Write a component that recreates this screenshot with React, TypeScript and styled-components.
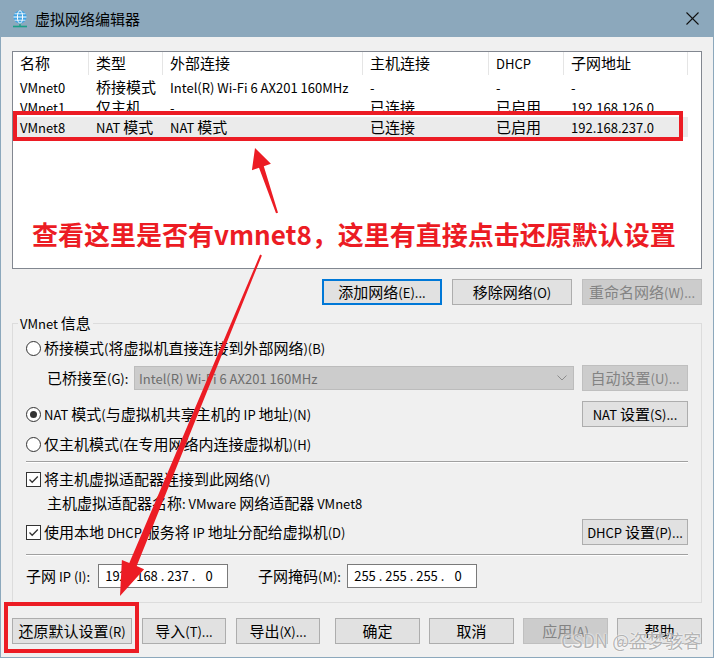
import React from 'react';
import styled, { createGlobalStyle } from 'styled-components';

const GlobalStyle = createGlobalStyle`
  html, body {
    margin: 0;
    padding: 0;
    background: #ffffff;
  }
  * {
    box-sizing: border-box;
  }
`;

const Window = styled.div`
  position: relative;
  width: 714px;
  height: 658px;
  display: flex;
  flex-direction: column;
  background: #f0f0f0;
  box-shadow: inset 0 0 0 1px #8ca8bc;
  overflow: hidden;
  color: #000;
  font-family: "Noto Sans CJK SC", "Noto Sans", sans-serif;
  font-size: 15px;
  line-height: 20px;
`;

// the dialog font draws latin letters smaller than the CJK glyphs
const Latin = styled.span`
  font-size: 13px;
`;

const T: React.FC<{ children: string }> = ({ children }) => (
  <span>
    {children.split(/([\x20-\x7e]+)/).map((part, i) =>
      i % 2 === 1 ? <Latin key={i}>{part}</Latin> : part
    )}
  </span>
);

const TitleBar = styled.div`
  height: 37px;
  flex: none;
  display: flex;
  align-items: center;
  padding: 0 15px 0 12px;
  background: #8ca8bc;
`;

const TitleText = styled.div`
  margin-left: 7px;
  font-size: 15px;
`;

const CloseGlyph = styled.svg`
  margin-left: auto;
  width: 13px;
  height: 13px;
`;

const Body = styled.div`
  display: flex;
  flex-direction: column;
  padding: 14px 12px 0 12px;
`;

const ListView = styled.div`
  height: 218px;
  background: #fff;
  border: 1px solid #828790;
`;

const ListHeader = styled.div`
  display: flex;
  height: 25px;
`;

const HeaderCell = styled.div<{ $w: number }>`
  width: ${p => p.$w}px;
  flex: none;
  height: 23px;
  padding-left: 7px;
  line-height: 22px;
  border-right: 1px solid #e5e5e5;
  white-space: nowrap;
`;

const ListRow = styled.div<{ $selected?: boolean }>`
  display: flex;
  width: 675px;
  height: 20px;
  background: ${p => (p.$selected ? '#ebebeb' : 'transparent')};
`;

const Cell = styled.div<{ $w: number }>`
  width: ${p => p.$w}px;
  flex: none;
  padding-left: 7px;
  line-height: 20px;
  white-space: nowrap;
  overflow: hidden;
`;

const ButtonRow = styled.div<{ $top: number; $gap: number }>`
  display: flex;
  justify-content: flex-end;
  gap: ${p => p.$gap}px;
  margin-top: ${p => p.$top}px;
`;

type Variant = 'normal' | 'focused' | 'disabled';

const Button = styled.button<{ $w: number; $variant?: Variant }>`
  width: ${p => p.$w}px;
  height: 26px;
  flex: none;
  padding: 0;
  font: inherit;
  line-height: 20px;
  white-space: nowrap;
  background: ${p => (p.$variant === 'disabled' ? '#cccccc' : '#e1e1e1')};
  color: ${p => (p.$variant === 'disabled' ? '#838383' : '#000')};
  border: ${p =>
    p.$variant === 'focused'
      ? '2px solid #0078d7'
      : p.$variant === 'disabled'
      ? '1px solid #bfbfbf'
      : '1px solid #adadad'};
`;

const GroupBox = styled.fieldset`
  margin: 8px 0 0 0;
  padding: 0;
  height: 290px;
  min-inline-size: 0;
  border: 1px solid #dcdcdc;
`;

const GroupLegend = styled.legend`
  margin-left: 5px;
  padding: 0 2px;
  line-height: 20px;
`;

const GroupInner = styled.div`
  display: flex;
  flex-direction: column;
  padding: 0 13px;
`;

const OptionRow = styled.div<{ $top: number; $h?: number; $indent?: number }>`
  display: flex;
  align-items: center;
  height: ${p => p.$h ?? 20}px;
  margin-top: ${p => p.$top}px;
  padding-left: ${p => p.$indent ?? 0}px;
  white-space: nowrap;
`;

const Spacer = styled.div`
  flex: 1;
`;

const Radio = styled.span<{ $checked?: boolean }>`
  position: relative;
  width: 15px;
  height: 15px;
  flex: none;
  margin-right: 3px;
  border: 1px solid #333;
  border-radius: 50%;
  background: #fff;
  &::after {
    content: '';
    display: ${p => (p.$checked ? 'block' : 'none')};
    position: absolute;
    left: 3px;
    top: 3px;
    width: 7px;
    height: 7px;
    border-radius: 50%;
    background: #333;
  }
`;

const CheckBox = styled.span`
  display: flex;
  align-items: center;
  justify-content: center;
  width: 15px;
  height: 15px;
  flex: none;
  margin-right: 3px;
  border: 1px solid #333;
  background: #fff;
`;

const Combo = styled.div`
  display: flex;
  align-items: center;
  width: 440px;
  height: 24px;
  padding-left: 4px;
  padding-right: 6px;
  background: #cccccc;
  border: 1px solid #bcbcbc;
  color: #6d6d6d;
`;

const Separator = styled.div<{ $top: number }>`
  margin-top: ${p => p.$top}px;
  height: 2px;
  border-top: 1px solid #a0a0a0;
  border-bottom: 1px solid #ffffff;
`;

const FieldLabel = styled.div<{ $w: number; $left?: number }>`
  width: ${p => p.$w}px;
  margin-left: ${p => p.$left ?? 0}px;
  flex: none;
`;

const IpBox = styled.div`
  display: flex;
  align-items: center;
  width: 130px;
  height: 24px;
  padding-left: 5px;
  background: #fff;
  border: 1px solid #7a7a7a;
  font-size: 13px;
`;

const IpPart = styled.span`
  width: 24px;
  text-align: center;
`;

const IpDot = styled.span`
  width: 7px;
  text-align: center;
`;

const Footer = styled.div`
  display: flex;
  justify-content: space-between;
  margin-top: 15px;
`;

const ButtonGroup = styled.div<{ $gap: number }>`
  display: flex;
  gap: ${p => p.$gap}px;
`;

/* annotation layer drawn over the dialog */
const MarkBox = styled.div`
  position: absolute;
  border: 4px solid #ec1c24;
  pointer-events: none;
`;

const Note = styled.div`
  position: absolute;
  left: 32px;
  top: 221px;
  font-size: 26px;
  line-height: 26px;
  font-weight: 700;
  color: #ec1c24;
  white-space: nowrap;
`;

const ArrowLayer = styled.svg`
  position: absolute;
  left: 0;
  top: 0;
  width: 714px;
  height: 658px;
  pointer-events: none;
`;

const Watermark = styled.div`
  position: absolute;
  left: 561px;
  top: 629px;
  font-size: 18px;
  line-height: 22px;
  color: rgba(130, 130, 130, 0.6);
  text-shadow: 0 0 2px #fff, 0 0 1px #fff;
  white-space: nowrap;
`;

const columns = [76, 74, 200, 126, 75, 124];
const headers = ['名称', '类型', '外部连接', '主机连接', 'DHCP', '子网地址'];
const networks = [
  ['VMnet0', '桥接模式', 'Intel(R) Wi-Fi 6 AX201 160MHz', '-', '-', '-'],
  ['VMnet1', '仅主机...', '-', '已连接', '已启用', '192.168.126.0'],
  ['VMnet8', 'NAT 模式', 'NAT 模式', '已连接', '已启用', '192.168.237.0'],
];

const GlobeIcon = () => (
  <svg width="16" height="18" viewBox="0 0 16 18">
    <circle cx="8" cy="7" r="6.5" fill="#3fa3e4" />
    <ellipse cx="8" cy="7" rx="2.6" ry="6.3" fill="none" stroke="#fff" strokeWidth="1" />
    <line x1="1.5" y1="7" x2="14.5" y2="7" stroke="#fff" strokeWidth="1" />
    <line x1="2.6" y1="3.8" x2="13.4" y2="3.8" stroke="#fff" strokeWidth="0.8" />
    <line x1="2.6" y1="10.2" x2="13.4" y2="10.2" stroke="#fff" strokeWidth="0.8" />
    <line x1="8" y1="13.5" x2="8" y2="16" stroke="#1a9f86" strokeWidth="1.4" />
    <line x1="1" y1="16.5" x2="15" y2="16.5" stroke="#1a9f86" strokeWidth="1.6" />
  </svg>
);

const Check = () => (
  <svg width="13" height="13" viewBox="0 0 13 13">
    <polyline points="2.5,6.5 5.2,9.3 10.8,3.5" fill="none" stroke="#333" strokeWidth="1.3" />
  </svg>
);

const IpField: React.FC<{ parts: string[] }> = ({ parts }) => (
  <IpBox>
    {parts.map((part, i) => (
      <React.Fragment key={i}>
        {i > 0 && <IpDot>.</IpDot>}
        <IpPart>{part}</IpPart>
      </React.Fragment>
    ))}
  </IpBox>
);

export default function App() {
  return (
    <>
      <GlobalStyle />
      <Window>
        <TitleBar>
          <GlobeIcon />
          <TitleText>虚拟网络编辑器</TitleText>
          <CloseGlyph viewBox="0 0 13 13">
            <line x1="0.5" y1="0.5" x2="12.5" y2="12.5" stroke="#111" strokeWidth="1.1" />
            <line x1="12.5" y1="0.5" x2="0.5" y2="12.5" stroke="#111" strokeWidth="1.1" />
          </CloseGlyph>
        </TitleBar>

        <Body>
          <ListView>
            <ListHeader>
              {headers.map((h, i) => (
                <HeaderCell key={h} $w={columns[i]}><T>{h}</T></HeaderCell>
              ))}
            </ListHeader>
            {networks.map((row, r) => (
              <ListRow key={row[0]} $selected={r === 2}>
                {row.map((text, i) => (
                  <Cell key={i} $w={columns[i]}><T>{text}</T></Cell>
                ))}
              </ListRow>
            ))}
          </ListView>

          <ButtonRow $top={10} $gap={10}>
            <Button $w={120} $variant="focused"><T>添加网络(E)...</T></Button>
            <Button $w={120}><T>移除网络(O)</T></Button>
            <Button $w={120} $variant="disabled"><T>重命名网络(W)...</T></Button>
          </ButtonRow>

          <GroupBox>
            <GroupLegend><T>VMnet 信息</T></GroupLegend>
            <GroupInner>
              <OptionRow $top={4}>
                <Radio />
                <T>桥接模式(将虚拟机直接连接到外部网络)(B)</T>
              </OptionRow>
              <OptionRow $top={7} $h={26} $indent={21}>
                <T>已桥接至(G):</T>
                <Spacer />
                <Combo>
                  <T>Intel(R) Wi-Fi 6 AX201 160MHz</T>
                  <Spacer />
                  <svg width="10" height="6" viewBox="0 0 10 6">
                    <polyline points="0.5,0.5 5,5 9.5,0.5" fill="none" stroke="#8c8c8c" strokeWidth="1" />
                  </svg>
                </Combo>
                <Button $w={106} $variant="disabled" style={{ marginLeft: 8 }}>
                  <T>自动设置(U)...</T>
                </Button>
              </OptionRow>
              <OptionRow $top={10} $h={26}>
                <Radio $checked />
                <T>NAT 模式(与虚拟机共享主机的 IP 地址)(N)</T>
                <Spacer />
                <Button $w={106}><T>NAT 设置(S)...</T></Button>
              </OptionRow>
              <OptionRow $top={7}>
                <Radio />
                <T>仅主机模式(在专用网络内连接虚拟机)(H)</T>
              </OptionRow>
              <Separator $top={7} />
              <OptionRow $top={6}>
                <CheckBox><Check /></CheckBox>
                <T>将主机虚拟适配器连接到此网络(V)</T>
              </OptionRow>
              <OptionRow $top={4} $indent={21}>
                <T>主机虚拟适配器名称: VMware 网络适配器 VMnet8</T>
              </OptionRow>
              <OptionRow $top={6} $h={26}>
                <CheckBox><Check /></CheckBox>
                <T>使用本地 DHCP 服务将 IP 地址分配给虚拟机(D)</T>
                <Spacer />
                <Button $w={106}><T>DHCP 设置(P)...</T></Button>
              </OptionRow>
              <Separator $top={9} />
              <OptionRow $top={7} $h={26}>
                <FieldLabel $w={72}><T>子网 IP (I):</T></FieldLabel>
                <IpField parts={['192', '168', '237', '0']} />
                <FieldLabel $w={89} $left={30}><T>子网掩码(M):</T></FieldLabel>
                <IpField parts={['255', '255', '255', '0']} />
              </OptionRow>
            </GroupInner>
          </GroupBox>

          <Footer>
            <ButtonGroup $gap={10}>
              <Button $w={120}><T>还原默认设置(R)</T></Button>
              <Button $w={84}><T>导入(T)...</T></Button>
              <Button $w={84}><T>导出(X)...</T></Button>
            </ButtonGroup>
            <ButtonGroup $gap={9}>
              <Button $w={85}>确定</Button>
              <Button $w={85}>取消</Button>
              <Button $w={85} $variant="disabled"><T>应用(A)</T></Button>
              <Button $w={85}>帮助</Button>
            </ButtonGroup>
          </Footer>
        </Body>

        <MarkBox style={{ left: 13, top: 111, width: 670, height: 30 }} />
        <MarkBox style={{ left: 4, top: 602, width: 135, height: 51 }} />
        <Note>查看这里是否有vmnet8，这里有直接点击还原默认设置</Note>
        <ArrowLayer viewBox="0 0 714 658">
          <polygon
            fill="#ec1c24"
            points="255,148 251.9,170.2 259,167.8 276,213.3 278,212.7 263.8,166.2 270.9,163.8"
          />
          <polygon
            fill="#ec1c24"
            points="120,596 121.9,560 129.3,563.1 260.1,254.6 261.9,255.4 136.7,566.1 144.1,569.2"
          />
        </ArrowLayer>
        <Watermark>CSDN @盗梦骇客</Watermark>
      </Window>
    </>
  );
}
